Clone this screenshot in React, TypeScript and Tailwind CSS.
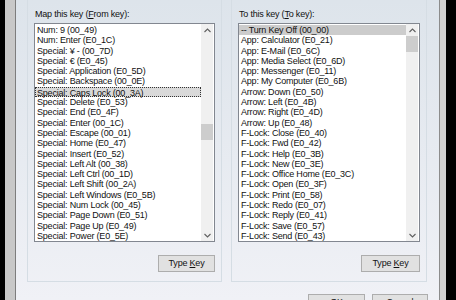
import React from 'react';

const fromKeys = [
  'Num: 9 (00_49)',
  'Num: Enter (E0_1C)',
  'Special: ¥ - (00_7D)',
  'Special: € (E0_45)',
  'Special: Application (E0_5D)',
  'Special: Backspace (00_0E)',
  'Special: Caps Lock (00_3A)',
  'Special: Delete (E0_53)',
  'Special: End (E0_4F)',
  'Special: Enter (00_1C)',
  'Special: Escape (00_01)',
  'Special: Home (E0_47)',
  'Special: Insert (E0_52)',
  'Special: Left Alt (00_38)',
  'Special: Left Ctrl (00_1D)',
  'Special: Left Shift (00_2A)',
  'Special: Left Windows (E0_5B)',
  'Special: Num Lock (00_45)',
  'Special: Page Down (E0_51)',
  'Special: Page Up (E0_49)',
  'Special: Power (E0_5E)',
];

const toKeys = [
  '-- Turn Key Off (00_00)',
  'App: Calculator (E0_21)',
  'App: E-Mail (E0_6C)',
  'App: Media Select (E0_6D)',
  'App: Messenger (E0_11)',
  'App: My Computer (E0_6B)',
  'Arrow: Down (E0_50)',
  'Arrow: Left (E0_4B)',
  'Arrow: Right (E0_4D)',
  'Arrow: Up (E0_48)',
  'F-Lock: Close (E0_40)',
  'F-Lock: Fwd (E0_42)',
  'F-Lock: Help (E0_3B)',
  'F-Lock: New (E0_3E)',
  'F-Lock: Office Home (E0_3C)',
  'F-Lock: Open (E0_3F)',
  'F-Lock: Print (E0_58)',
  'F-Lock: Redo (E0_07)',
  'F-Lock: Reply (E0_41)',
  'F-Lock: Save (E0_57)',
  'F-Lock: Send (E0_43)',
];

function Chevron({ up }: { up?: boolean }) {
  return (
    <svg width="7" height="5" viewBox="0 0 7 5" className="text-[#606060]">
      <path
        d={up ? 'M0.5 4 L3.5 1 L6.5 4' : 'M0.5 1 L3.5 4 L6.5 1'}
        fill="none"
        stroke="currentColor"
        strokeWidth="1.1"
      />
    </svg>
  );
}

function ListBox({
  items,
  selected,
  focused,
  thumbTop,
  width,
}: {
  items: string[];
  selected: number;
  focused?: boolean;
  thumbTop: string;
  width: string;
}) {
  return (
    <div className={`flex h-[219px] border border-[#828790] bg-white ${width}`}>
      <div className="flex-1 py-[1px]">
        {items.map((item, i) => (
          <div
            key={item}
            className={
              i === selected
                ? focused
                  ? 'h-[10.3px] leading-[10.3px] pl-[1px] bg-[#d9d9d9] border border-dotted border-[#333] whitespace-nowrap'
                  : 'h-[10.3px] leading-[10.3px] pl-[2px] bg-[#cccccc] whitespace-nowrap'
                : 'h-[10.3px] leading-[10.3px] pl-[2px] whitespace-nowrap'
            }
          >
            {item}
          </div>
        ))}
      </div>
      {/* Scrollbar */}
      <div className="w-[12px] mr-[1px] flex flex-col bg-[#f0f0f0]">
        <div className="h-[12px] flex items-center justify-center">
          <Chevron up />
        </div>
        <div className="flex-1">
          <div className={`h-[16px] bg-[#cdcdcd] ${thumbTop}`} />
        </div>
        <div className="h-[12px] flex items-center justify-center">
          <Chevron />
        </div>
      </div>
    </div>
  );
}

function Button({ children, width }: { children: React.ReactNode; width: string }) {
  return (
    <div
      className={`h-[17px] ${width} border border-[#adadad] bg-[#e1e1e1] flex items-center justify-center text-[#111]`}
    >
      <span>{children}</span>
    </div>
  );
}

export default function App() {
  return (
    <div className="w-[456px] h-[300px] overflow-hidden flex font-['Liberation_Sans',Arial,sans-serif] text-[9px] tracking-[-0.2px] text-[#111]">
      {/* Left window frame */}
      <div className="w-[5px] bg-black" />
      <div className="w-[11px] bg-[#c8c8c8] border-r border-[#7d7d7d]" />

      {/* Dialog body */}
      <div className="w-[423px] flex flex-col bg-gradient-to-b from-[#dde4eb] to-[#f0f1f6]">
        <div className="flex pl-[11px] gap-[9px]">
          {/* From key */}
          <div className="w-[195px] border-x border-b border-[#d5dde4] pl-[6px] pt-[8px] pb-[9px]">
            <div className="h-[12px] leading-[12px] pl-[1px]">
              Map this key (<u className="underline-offset-1">F</u>rom key):
            </div>
            <div className="mt-[3px]">
              <ListBox items={fromKeys} selected={6} focused thumbTop="mt-[88px]" width="w-[181px]" />
            </div>
            <div className="mt-[13px] w-[181px] flex justify-end">
              <Button width="w-[57px]">
                Type <u className="underline-offset-1">K</u>ey
              </Button>
            </div>
          </div>

          {/* To key */}
          <div className="w-[196px] border-x border-b border-[#d5dde4] pl-[6px] pt-[8px] pb-[9px]">
            <div className="h-[12px] leading-[12px] pl-[1px]">
              To this key (<u className="underline-offset-1">T</u>o key):
            </div>
            <div className="mt-[3px]">
              <ListBox items={toKeys} selected={0} thumbTop="mt-0" width="w-[182px]" />
            </div>
            <div className="mt-[13px] w-[182px] flex justify-end">
              <Button width="w-[59px]">
                Type <u className="underline-offset-1">K</u>ey
              </Button>
            </div>
          </div>
        </div>

        {/* Dialog buttons */}
        <div className="mt-[12px] flex justify-end gap-[7px] pr-[11px]">
          <Button width="w-[57px]">OK</Button>
          <Button width="w-[56px]">Cancel</Button>
        </div>
      </div>

      {/* Right window frame */}
      <div className="w-[7px] bg-[#d0d0d0] border-l border-[#8c8c8c]" />
      <div className="flex-1 bg-black" />
    </div>
  );
}
